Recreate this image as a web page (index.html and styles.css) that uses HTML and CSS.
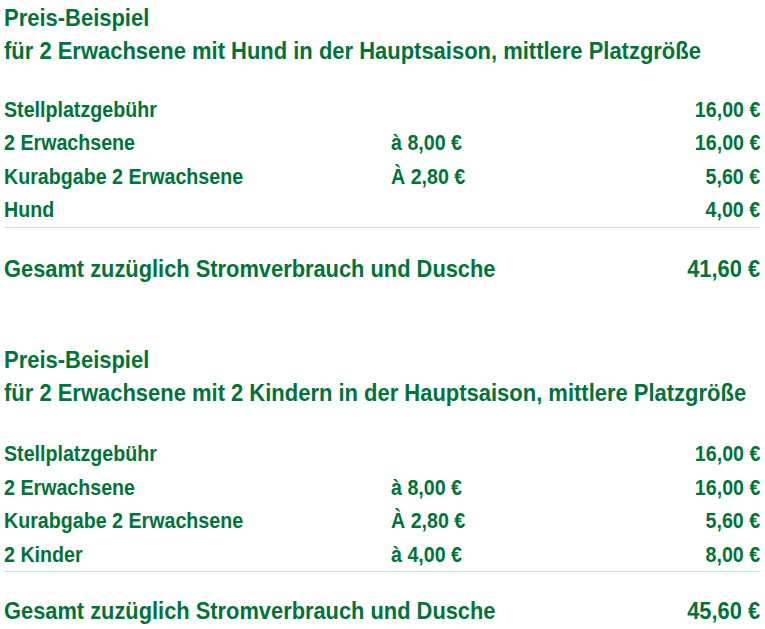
FILE: index.html
```html
<!DOCTYPE html>
<html lang="de">
<head>
<meta charset="utf-8">
<link rel="stylesheet" href="styles.css">
</head>
<body>
<section class="example">
  <h2 class="title"><span class="t">Preis-Beispiel</span><br><span class="t">für 2 Erwachsene mit Hund in der Hauptsaison, mittlere Platzgröße</span></h2>
  <div class="rows">
    <div class="row"><span class="label"><span class="t">Stellplatzgebühr</span></span><span class="unit"></span><span class="price"><span class="t">16,00 €</span></span></div>
    <div class="row"><span class="label"><span class="t">2 Erwachsene</span></span><span class="unit"><span class="t">à 8,00 €</span></span><span class="price"><span class="t">16,00 €</span></span></div>
    <div class="row"><span class="label"><span class="t">Kurabgabe 2 Erwachsene</span></span><span class="unit"><span class="t">À 2,80 €</span></span><span class="price"><span class="t">5,60 €</span></span></div>
    <div class="row"><span class="label"><span class="t">Hund</span></span><span class="unit"></span><span class="price"><span class="t">4,00 €</span></span></div>
  </div>
  <div class="total"><span class="t">Gesamt zuzüglich Stromverbrauch und Dusche</span><span class="t amount">41,60 €</span></div>
</section>
<section class="example second">
  <h2 class="title"><span class="t">Preis-Beispiel</span><br><span class="t">für 2 Erwachsene mit 2 Kindern in der Hauptsaison, mittlere Platzgröße</span></h2>
  <div class="rows">
    <div class="row"><span class="label"><span class="t">Stellplatzgebühr</span></span><span class="unit"></span><span class="price"><span class="t">16,00 €</span></span></div>
    <div class="row"><span class="label"><span class="t">2 Erwachsene</span></span><span class="unit"><span class="t">à 8,00 €</span></span><span class="price"><span class="t">16,00 €</span></span></div>
    <div class="row"><span class="label"><span class="t">Kurabgabe 2 Erwachsene</span></span><span class="unit"><span class="t">À 2,80 €</span></span><span class="price"><span class="t">5,60 €</span></span></div>
    <div class="row"><span class="label"><span class="t">2 Kinder</span></span><span class="unit"><span class="t">à 4,00 €</span></span><span class="price"><span class="t">8,00 €</span></span></div>
  </div>
  <div class="total"><span class="t">Gesamt zuzüglich Stromverbrauch und Dusche</span><span class="t amount">45,60 €</span></div>
</section>
</body>
</html>
```
FILE: styles.css
```css
html, body {
  margin: 0;
  padding: 0;
  background: #ffffff;
}
body {
  font-family: "Liberation Sans", Arial, sans-serif;
  font-weight: bold;
  color: #00733a;
  padding: 0 5px 0 4px;
}
.t {
  display: inline-block;
  white-space: nowrap;
  transform-origin: left center;
}
.example {
  padding-top: 1.5px;
}
.title {
  margin: 0;
  font-size: 23px;
  line-height: 33px;
  font-weight: bold;
}
.title .t {
  transform: scaleX(0.955);
}
.rows {
  margin-top: 25px;
  border-bottom: 1px solid #c8dfd5;
}
.second .rows {
  margin-top: 27px;
}
.row {
  display: grid;
  grid-template-columns: 387px 1fr auto;
  font-size: 22px;
  line-height: 33.5px;
}
.row .t {
  transform: scaleX(0.893);
}
.price {
  text-align: right;
}
.price .t {
  transform-origin: right center;
}
.total {
  display: flex;
  justify-content: space-between;
  font-size: 24px;
  line-height: 30px;
  padding-top: 26px;
}
.second .total {
  padding-top: 24px;
}
.total .t {
  transform: scaleX(0.91);
}
.total .amount {
  transform-origin: right center;
}
.second {
  margin-top: 59px;
}
```
